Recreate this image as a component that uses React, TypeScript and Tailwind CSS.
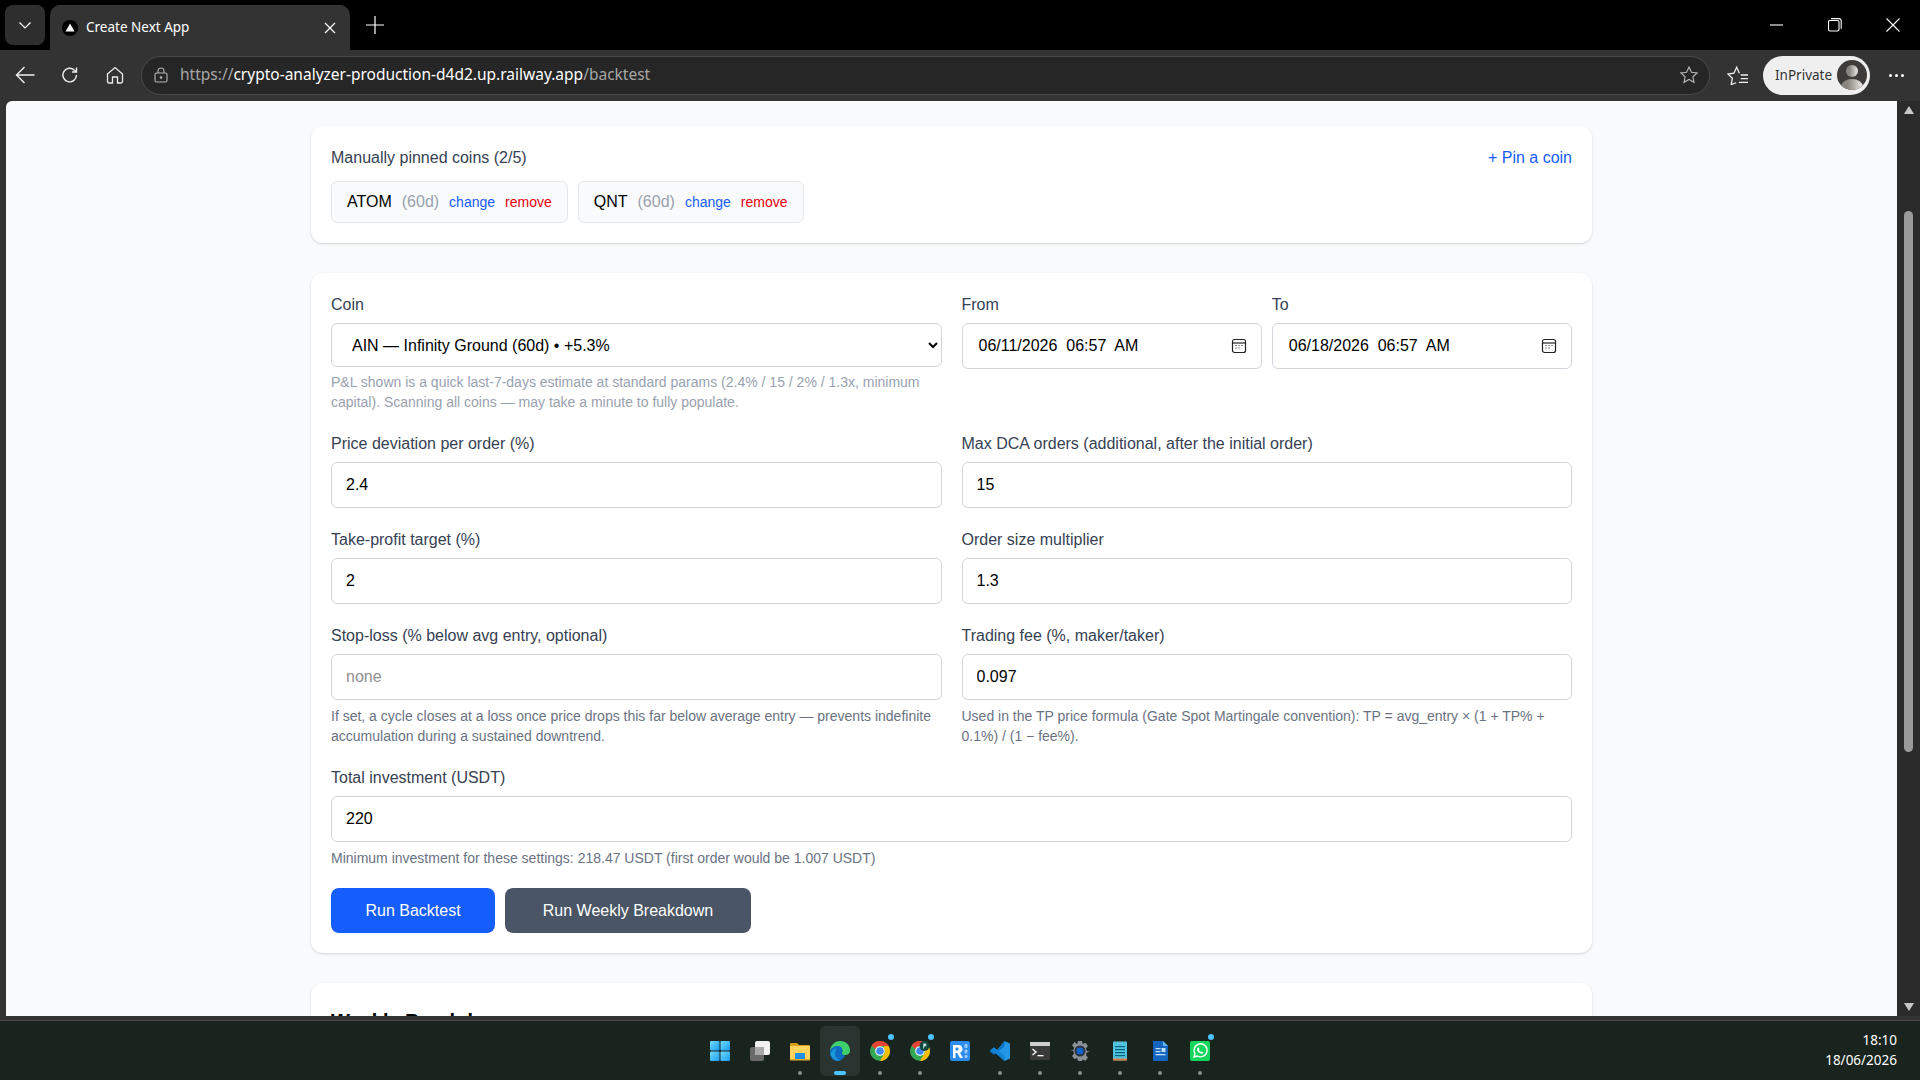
import React from "react";

const font = "[font-family:'Liberation_Sans',Arial,sans-serif]";

function WinIcon() {
  return (
    <svg width="20" height="20" viewBox="0 0 20 20">
      <defs>
        <linearGradient id="w1" x1="0" y1="0" x2="1" y2="1">
          <stop offset="0" stopColor="#6fdcff" />
          <stop offset="1" stopColor="#1d9bf0" />
        </linearGradient>
      </defs>
      <rect x="0" y="0" width="9.5" height="9.5" rx="1" fill="url(#w1)" />
      <rect x="10.5" y="0" width="9.5" height="9.5" rx="1" fill="url(#w1)" />
      <rect x="0" y="10.5" width="9.5" height="9.5" rx="1" fill="url(#w1)" />
      <rect x="10.5" y="10.5" width="9.5" height="9.5" rx="1" fill="url(#w1)" />
    </svg>
  );
}
function TaskView() {
  return (
    <svg width="20" height="20" viewBox="0 0 20 20">
      <rect x="0" y="6" width="14" height="14" rx="2" fill="#6a6a6a" />
      <rect x="5" y="0" width="15" height="14" rx="2" fill="#f2f2f2" />
      <rect x="5" y="6" width="9" height="8" fill="#a8a8a8" />
    </svg>
  );
}
function Folder() {
  return (
    <svg width="20" height="20" viewBox="0 0 20 20">
      <path d="M0 3a1 1 0 0 1 1-1h6l2 2h10a1 1 0 0 1 1 1v3H0z" fill="#d9a01c" />
      <rect x="0" y="5" width="20" height="14" rx="1" fill="#fcd35c" />
      <rect x="5" y="12" width="10" height="7" rx="1" fill="#1b8fe0" />
      <rect x="0" y="18" width="20" height="1.5" fill="#e8a91f" />
    </svg>
  );
}
function Edge() {
  return (
    <svg width="20" height="20" viewBox="0 0 20 20">
      <path d="M10 0C16 0 20 4 20 9.5c0 3-2.4 4.6-5 4.6-2.2 0-3.4-1-3.4-1.9 0-.6.7-.9.7-2.2C12.300 7.500 10 6 7.500 6 4 6 1 8 0 10 .4 4.500 4.500 0 10 0z" fill="#3fd06c" />
      <path d="M0 10c1-3 4-5 7.500-5 3 0 5 2 5 4.500 0 1.300-.7 1.700-.7 2.500 0 1.400 1.800 2.300 3.500 2.300-1.500 3.500-5 5.700-8 5.700-4.300 0-7.800-4-7.300-9.500z" fill="#0f6cc4" />
      <path d="M5 13c0 3 2.500 6 6 6.500-5 1.200-9.500-2.500-10.500-7C2 9 4 7.500 6.500 7.500 5.500 9 5 11 5 13z" fill="#1a9bd8" />
    </svg>
  );
}
function Chrome({ badge }: { badge?: boolean }) {
  return (
    <svg width="20" height="20" viewBox="0 0 20 20">
      <circle cx="10" cy="10" r="10" fill="#34a853" />
      <path d="M10 0a10 10 0 0 1 8.660 5H10a5 5 0 0 0-4.700 3.300L1.600 4.600A10 10 0 0 1 10 0z" fill="#ea4335" />
      <path d="M18.660 5A10 10 0 0 1 10 20l4.300-7.500A5 5 0 0 0 14 7V5z" fill="#fbbc05" />
      <circle cx="10" cy="10" r="4.800" fill="#fff" />
      <circle cx="10" cy="10" r="3.800" fill="#4285f4" />
      {badge && (
        <>
          <circle cx="14.500" cy="5" r="5" fill="#12463c" />
          <path d="M13.200 2.500h1.800a1.400 1.400 0 0 1 0 2.900h-.9v2h-.9z" fill="#bfe6da" />
        </>
      )}
    </svg>
  );
}
function RApp() {
  return (
    <svg width="20" height="20" viewBox="0 0 20 20">
      <rect width="20" height="20" rx="2" fill="#2b8ced" />
      <path d="M3 4h5.500a4 4 0 0 1 1.500 7.700L13 17h-3l-2.700-5H5.500v5H3z" fill="#fff" />
      <rect x="5.500" y="6.500" width="3" height="3" rx="1" fill="#2b8ced" />
      <rect x="14.500" y="3" width="3" height="4" rx="1" fill="#9cc9f5" />
      <rect x="14.500" y="8.500" width="3" height="4" rx="1" fill="#9cc9f5" />
      <rect x="14.500" y="14" width="3" height="3" rx="1" fill="#9cc9f5" />
    </svg>
  );
}
function VSCode() {
  return (
    <svg width="20" height="20" viewBox="0 0 20 20">
      <path d="M14.500 0 20 2.500v15L14.500 20 5 11l3-3z" fill="#2496e6" />
      <path d="M14.500 5.500 7 10l7.500 4.500V20L0 10.800V9.200L2 8l5 2 7.500-10z" fill="#0f6fbd" opacity="0" />
      <path d="M14.500 0v5.500L4 13.800 1 11.500 0 10.500V9.500L1 8.500 3.200 7.200 7 10.300z" fill="#0d74c4" />
      <path d="M0 9.500 1 8.500l13.500 11.500V14.500L4 6.200 1 8.500z" fill="#1283d4" />
    </svg>
  );
}
function Term() {
  return (
    <svg width="20" height="20" viewBox="0 0 20 20">
      <rect y="1" width="20" height="18" rx="1" fill="#3a3a3a" />
      <rect y="1" width="20" height="4" fill="#cfcfcf" />
      <path d="M2.500 8 6 11l-3.500 3" fill="none" stroke="#fff" strokeWidth="1.400" />
      <rect x="7.500" y="14" width="6" height="1.300" fill="#fff" />
    </svg>
  );
}
function Gear() {
  return (
    <svg width="20" height="20" viewBox="0 0 20 20">
      <path
        d="M8 0h4l.8 3 2.800-1.200 2.300 3.200-2 2.400.9 2.600 3.200.7v0l-3.200.8-.9 2.600 2 2.400-2.300 3.200-2.800-1.200L12 20H8l-.8-3-2.800 1.200-2.300-3.200 2-2.400-.9-2.600L0 10l3.200-.7.9-2.600-2-2.400 2.300-3.200L7.200 3z"
        fill="#8b9199"
      />
      <circle cx="10" cy="10" r="5.500" fill="#2f3338" />
      <circle cx="10" cy="10" r="3.600" fill="#1263c9" />
    </svg>
  );
}
function Note() {
  return (
    <svg width="20" height="20" viewBox="0 0 20 20">
      <rect x="3" y="0.500" width="14" height="19" rx="1" fill="#4fc3e0" />
      <rect x="3" y="17.500" width="14" height="2" fill="#e07a3a" />
      <rect x="5" y="5" width="10" height="1.200" fill="#0c5f78" />
      <rect x="5" y="8" width="10" height="1.200" fill="#0c5f78" />
      <rect x="5" y="11" width="10" height="1.200" fill="#0c5f78" />
      <rect x="5" y="14" width="10" height="1.200" fill="#0c5f78" />
    </svg>
  );
}
function Writer() {
  return (
    <svg width="20" height="20" viewBox="0 0 20 20">
      <path d="M4 0h9l5 5v13.500a1.500 1.500 0 0 1-1.500 1.500h-12A1.500 1.500 0 0 1 3 18.500V1a1 1 0 0 1 1-1z" fill="#1565c0" />
      <path d="M13 0l5 5h-5z" fill="#64b5f6" />
      <rect x="5.500" y="7" width="5" height="1.300" fill="#bbdefb" />
      <rect x="11.500" y="7" width="4" height="4" fill="#bbdefb" />
      <rect x="5.500" y="10" width="5" height="1.300" fill="#bbdefb" />
      <rect x="5.500" y="13" width="10" height="1.300" fill="#bbdefb" />
    </svg>
  );
}
function WhatsApp() {
  return (
    <svg width="20" height="20" viewBox="0 0 20 20">
      <rect width="20" height="20" rx="2" fill="#15d65c" />
      <path d="M4 16l1-3.300A6.500 6.500 0 1 1 7.400 15z" fill="none" stroke="#fff" strokeWidth="1.400" />
      <path d="M7.800 6.800c.5-.5 1-.3 1.200.2l.4 1c.1.300-.5.800-.5 1 .3.800 1.200 1.700 2 2 .2 0 .7-.6 1-.5l1 .5c.4.200.5.700.1 1.200-.6.700-1.600.8-3 .1-1.200-.6-2.300-1.800-2.800-3-.4-1-.1-1.900.6-2.500z" fill="#fff" />
    </svg>
  );
}

function Task({ children, dot, badge, active }: { children: React.ReactNode; dot?: boolean; badge?: boolean; active?: boolean }) {
  return (
    <div className={`relative flex h-[50px] w-10 items-center justify-center ${active ? "rounded-md bg-[#2a3531]" : ""}`}>
      {children}
      {badge && <span className="absolute right-[6px] top-[8px] h-[6px] w-[6px] rounded-full bg-[#4cc2ff]" />}
      {dot && <span className="absolute bottom-[1px] h-1 w-1 rounded-full bg-[#8b8f8c]" />}
      {active && <span className="absolute bottom-[1px] h-1 w-3 rounded-full bg-[#4cc2ff]" />}
    </div>
  );
}

function Field({ label, value, placeholder, hint }: { label: string; value?: string; placeholder?: string; hint?: string }) {
  return (
    <div>
      <label className="mb-1.5 block text-base leading-6 text-[#364153]">{label}</label>
      <input
        readOnly
        value={value ?? ""}
        placeholder={placeholder}
        className="h-[46px] w-full rounded-md border border-[#d1d5dc] bg-white px-3.5 text-base text-black outline-none placeholder:text-[#8f8f8f]"
      />
      {hint && <p className="mt-1.5 text-sm leading-5 text-[#6a7282]">{hint}</p>}
    </div>
  );
}

function DateBox({ label, value }: { label: string; value: string }) {
  return (
    <div>
      <label className="mb-1.5 block text-base leading-6 text-[#364153]">{label}</label>
      <div className="flex h-[46px] items-center justify-between rounded-md border border-[#d1d5dc] bg-white pl-4 pr-3.5 text-base text-black">
        <span className="whitespace-pre">{value}</span>
        <svg width="16" height="16" viewBox="0 0 16 16" fill="none">
          <rect x="1.500" y="1.500" width="13" height="13" rx="2" stroke="#222" strokeWidth="1.200" />
          <path d="M1.500 5h13" stroke="#222" strokeWidth="1.200" />
          <path d="M4.500 7.500h1M7.500 7.500h1M10.500 7.500h1M4.500 10h1M7.500 10h1" stroke="#222" strokeWidth="1.200" />
        </svg>
      </div>
    </div>
  );
}

function Chip({ coin }: { coin: string }) {
  return (
    <div className="flex h-[42px] items-center rounded-md border border-[#e5e7eb] bg-[#f9fafb] px-[15px]">
      <span className="text-base text-black">{coin}</span>
      <span className="ml-2.5 text-base text-[#99a1af]">(60d)</span>
      <span className="ml-2.5 text-sm text-[#155dfc]">change</span>
      <span className="ml-2.5 text-sm text-[#e7000b]">remove</span>
    </div>
  );
}

export default function App() {
  return (
    <div className={`flex h-screen w-full flex-col overflow-hidden bg-[#333] ${font}`}>
      {/* tab strip */}
      <div className="flex h-[50px] shrink-0 items-end bg-black [font-family:'Noto_Sans',sans-serif]">
        <div className="mb-[5px] ml-[5px] flex h-10 w-10 items-center justify-center rounded-lg bg-[#2e2e2e]">
          <svg width="16" height="16" viewBox="0 0 16 16" fill="none" stroke="#fff" strokeWidth="1.200">
            <path d="M2.500 5.500 8 11l5.500-5.500" />
          </svg>
        </div>
        <div className="ml-[5px] flex h-[45px] w-[300px] items-center rounded-t-[10px] bg-[#333] pl-3 pr-3.5">
          <span className="flex h-4 w-4 items-center justify-center rounded-full bg-black">
            <svg width="10" height="9" viewBox="0 0 10 9"><path d="M5 0.500 9.500 8.500H.5z" fill="#fff" /></svg>
          </span>
          <span className="ml-[8px] flex-1 text-[13.500px] text-white">Create Next App</span>
          <svg width="12" height="12" viewBox="0 0 12 12" stroke="#fff" strokeWidth="1.200"><path d="M1 1l10 10M11 1 1 11" /></svg>
        </div>
        <div className="mb-[5px] ml-[16px] flex h-10 items-center">
          <svg width="18" height="18" viewBox="0 0 18 18" stroke="#fff" strokeWidth="1.200"><path d="M9 0v18M0 9h18" /></svg>
        </div>
        <div className="mb-[5px] ml-auto mr-[20px] flex h-10 items-center gap-[44px]">
          <svg width="14" height="14" viewBox="0 0 14 14" stroke="#fff" strokeWidth="1.100"><path d="M0 7h13" /></svg>
          <svg width="14" height="14" viewBox="0 0 14 14" fill="none" stroke="#fff" strokeWidth="1.100">
            <rect x="0.500" y="2.500" width="10.500" height="10.500" rx="1.500" />
            <path d="M3 .6h8a2.200 2.200 0 0 1 2.200 2.200v8" />
          </svg>
          <svg width="14" height="14" viewBox="0 0 14 14" stroke="#fff" strokeWidth="1.100"><path d="M.5.5l13 13M13.500.5l-13 13" /></svg>
        </div>
      </div>

      {/* toolbar */}
      <div className="flex h-[51px] shrink-0 items-center bg-[#333] pb-[1px] [font-family:'Noto_Sans',sans-serif]">
        <div className="ml-[15px] flex w-5 justify-center">
          <svg width="20" height="18" viewBox="0 0 20 18" fill="none" stroke="#efefef" strokeWidth="1.400"><path d="M9.500 1 1.500 9l8 8M1.500 9H19.500" /></svg>
        </div>
        <div className="ml-[25px] flex w-5 justify-center">
          <svg width="18" height="18" viewBox="0 0 18 18" fill="none" stroke="#efefef" strokeWidth="1.400">
            <path d="M15.500 9a6.800 6.800 0 1 1-2-4.800L15.500 6" />
            <path d="M15.500 1.500V6H11" />
          </svg>
        </div>
        <div className="ml-[25px] flex w-5 justify-center">
          <svg width="18" height="18" viewBox="0 0 18 18" fill="none" stroke="#efefef" strokeWidth="1.300">
            <path d="M1.500 8 9 1.500 16.500 8v7.500a1.500 1.500 0 0 1-1.500 1.500h-3.500v-6h-5v6H3a1.500 1.500 0 0 1-1.500-1.500z" />
          </svg>
        </div>
        <div className="ml-[16px] flex h-[39px] flex-1 items-center rounded-full border border-[#4a4a4a] bg-[#262626] pl-3 pr-[10px]">
          <svg width="14" height="16" viewBox="0 0 14 16" fill="none" stroke="#b5b5b5" strokeWidth="1.100">
            <rect x="1" y="6" width="12" height="9" rx="1.500" />
            <path d="M4 6V4a3 3 0 0 1 6 0v2" />
            <circle cx="7" cy="10.500" r="0.800" fill="#b5b5b5" />
          </svg>
          <span className="ml-[12px] text-[15.500px] text-[#a6a6a6]">
            https://<span className="text-white">crypto-analyzer-production-d4d2.up.railway.app</span>/backtest
          </span>
          <svg className="ml-auto" width="20" height="20" viewBox="0 0 24 24" fill="none" stroke="#b5b5b5" strokeWidth="1.400">
            <path d="M12 2.500l2.900 6.200 6.800.8-5 4.600 1.300 6.700-6-3.400-6 3.400 1.300-6.700-5-4.600 6.800-.8z" />
          </svg>
        </div>
        <div className="ml-[16px] flex w-6 justify-center">
          <svg width="22" height="20" viewBox="0 0 24 22" fill="none" stroke="#efefef" strokeWidth="1.400">
            <path d="M10 19.500l-5.500 2 1.300-7L1 10l6.500-1L10.500 2.500 13.500 9" />
            <path d="M15 11h8M15 15h8M13 19h10" />
          </svg>
        </div>
        <div className="ml-[13px] flex h-[39px] w-[107px] items-center rounded-full bg-[#efefef] pl-3 pr-[3px]">
          <span className="text-[13.500px] text-[#333]">InPrivate</span>
          <span className="ml-auto flex h-[30px] w-[30px] items-center justify-center overflow-hidden rounded-full bg-[#3e3b38]">
            <svg width="30" height="30" viewBox="0 0 30 30">
              <defs>
                <linearGradient id="av" x1="0" x2="1" y1="0" y2="0">
                  <stop offset="0.300" stopColor="#8a857f" />
                  <stop offset="0.900" stopColor="#e0ddd8" />
                </linearGradient>
              </defs>
              <circle cx="15" cy="11" r="6" fill="url(#av)" />
              <ellipse cx="15" cy="27" rx="11" ry="8" fill="url(#av)" />
            </svg>
          </span>
        </div>
        <div className="ml-[19px] mr-[16px] flex gap-[3px]">
          <span className="h-[3px] w-[3px] rounded-full bg-white" />
          <span className="h-[3px] w-[3px] rounded-full bg-white" />
          <span className="h-[3px] w-[3px] rounded-full bg-white" />
        </div>
      </div>

      {/* viewport */}
      <div className="flex min-h-0 flex-1">
        <main className="ml-[6px] min-w-0 flex-1 overflow-hidden rounded-tl-md bg-[#f9fafb] pt-[25px]">
          <div className="mx-auto w-[1281px]">
            <section className="flex h-[117px] flex-col rounded-xl bg-white p-5 shadow-[0_1px_3px_rgba(0,0,0,0.1),0_1px_2px_rgba(0,0,0,0.06)]">
              <div className="flex items-center justify-between leading-6">
                <span className="text-base text-[#364153]">Manually pinned coins (2/5)</span>
                <span className="text-base text-[#155dfc]">+ Pin a coin</span>
              </div>
              <div className="mt-[11px] flex gap-2.5">
                <Chip coin="ATOM" />
                <Chip coin="QNT" />
              </div>
            </section>

            <section className="mt-[30px] rounded-xl bg-white p-5 pb-5 shadow-[0_1px_3px_rgba(0,0,0,0.1),0_1px_2px_rgba(0,0,0,0.06)]">
              <div className="grid grid-cols-2 gap-x-5 gap-y-5">
                <div>
                  <label className="mb-1.5 block text-base leading-6 text-[#364153]">Coin</label>
                  <select className="h-[44px] w-full rounded-md border border-[#d1d5dc] bg-white px-4 text-base text-black outline-none">
                    <option>AIN — Infinity Ground (60d) • +5.3%</option>
                  </select>
                  <p className="mt-[5px] text-sm leading-5 text-[#99a1af]">
                    P&amp;L shown is a quick last-7-days estimate at standard params (2.4% / 15 / 2% / 1.3x, minimum capital). Scanning all coins — may take a minute to fully populate.
                  </p>
                </div>
                <div className="grid grid-cols-2 items-start gap-2.5">
                  <DateBox label="From" value="06/11/2026  06:57  AM" />
                  <DateBox label="To" value="06/18/2026  06:57  AM" />
                </div>
                <Field label="Price deviation per order (%)" value="2.4" />
                <Field label="Max DCA orders (additional, after the initial order)" value="15" />
                <Field label="Take-profit target (%)" value="2" />
                <Field label="Order size multiplier" value="1.3" />
                <Field
                  label="Stop-loss (% below avg entry, optional)"
                  placeholder="none"
                  hint="If set, a cycle closes at a loss once price drops this far below average entry — prevents indefinite accumulation during a sustained downtrend."
                />
                <Field
                  label="Trading fee (%, maker/taker)"
                  value="0.097"
                  hint="Used in the TP price formula (Gate Spot Martingale convention): TP = avg_entry × (1 + TP% + 0.1%) / (1 − fee%)."
                />
                <div className="col-span-2">
                  <Field
                    label="Total investment (USDT)"
                    value="220"
                    hint="Minimum investment for these settings: 218.47 USDT (first order would be 1.007 USDT)"
                  />
                </div>
              </div>
              <div className="mt-5 flex gap-2.5">
                <button className="h-[45px] w-[164px] rounded-lg bg-[#155dfc] text-base font-medium text-white">Run Backtest</button>
                <button className="h-[45px] w-[246px] rounded-lg bg-[#4a5565] text-base font-medium text-white">Run Weekly Breakdown</button>
              </div>
            </section>

            <section className="mt-[30px] h-[200px] rounded-xl bg-white p-5 shadow-[0_1px_3px_rgba(0,0,0,0.1),0_1px_2px_rgba(0,0,0,0.06)]">
              <h2 className="mt-1 text-xl font-bold text-black">Weekly Breakdown</h2>
            </section>
          </div>
        </main>
        <div className="flex w-[23px] shrink-0 flex-col items-center justify-between bg-[#2b2b2b] py-1">
          <svg width="12" height="10" viewBox="0 0 12 10"><path d="M6 1l5 8H1z" fill="#c8c8c8" /></svg>
          <div className="mb-auto mt-[96px] h-[541px] w-[9px] rounded-full bg-[#9a9a9a]" />
          <svg width="12" height="10" viewBox="0 0 12 10"><path d="M6 9 1 1h10z" fill="#c8c8c8" /></svg>
        </div>
      </div>

      {/* strip under page */}
      <div className="h-[5px] shrink-0 border-b border-[#4a4a4a] bg-[#333]" />

      {/* taskbar */}
      <footer className="relative flex h-[59px] shrink-0 items-center justify-center bg-[#18241d]">
        <div className="flex items-center pl-0">
          <Task><WinIcon /></Task>
          <Task><TaskView /></Task>
          <Task dot><Folder /></Task>
          <Task active><Edge /></Task>
          <Task dot badge><Chrome /></Task>
          <Task dot badge><Chrome badge /></Task>
          <Task><RApp /></Task>
          <Task dot><VSCode /></Task>
          <Task dot><Term /></Task>
          <Task dot><Gear /></Task>
          <Task dot><Note /></Task>
          <Task dot><Writer /></Task>
          <Task dot badge><WhatsApp /></Task>
        </div>
        <div className="absolute right-[23px] top-[9px] text-right text-[13.500px] leading-5 text-white [font-family:'Noto_Sans',sans-serif]">
          <div>18:10</div>
          <div>18/06/2026</div>
        </div>
      </footer>
    </div>
  );
}
